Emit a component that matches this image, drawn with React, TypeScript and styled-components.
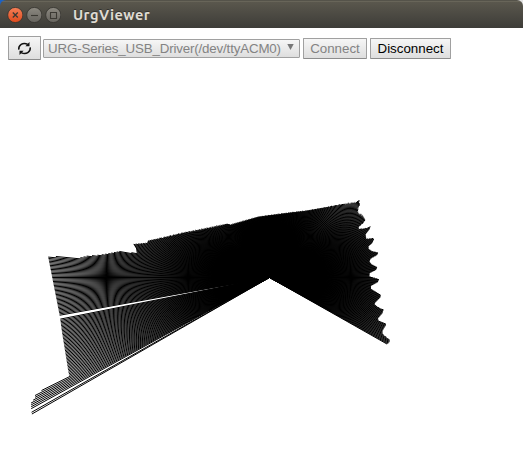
import React from "react";
import styled, { createGlobalStyle } from "styled-components";

const GlobalStyle = createGlobalStyle`
  body { margin: 0; background: #fff; overflow: hidden; }
`;

const Window = styled.div`
  display: flex;
  flex-direction: column;
  height: 463px;
  background: #fff;
  font-family: "Liberation Sans", Arial, sans-serif;
`;

const TitleFrame = styled.div`
  background: linear-gradient(90deg, #1c62c4 0 50%, #e4e4e4 50%);
`;

const TitleBar = styled.header`
  box-sizing: border-box;
  display: flex;
  align-items: center;
  height: 28px;
  padding: 1px 7px 0;
  border-radius: 6px 6px 0 0;
  background: linear-gradient(#55534a 0 1px, #686559 1px 2px, #5a574d 2px, #3d3c38 100%);
`;

const Controls = styled.div`
  display: flex;
  gap: 3px;
`;

const Title = styled.h1`
  margin: 0 0 0 12px;
  font: bold 14.5px/20px "Ubuntu", "Noto Sans", sans-serif;
  letter-spacing: 0.45px;
  color: #dfdbd2;
  text-shadow: 0 -1px 0 #33322e;
`;

const Toolbar = styled.div`
  display: flex;
  align-items: center;
  height: 24px;
  padding: 8px 8px 0;
`;

const Button = styled.button<{ $width: number; $tall?: boolean; $gap?: number }>`
  box-sizing: border-box;
  display: flex;
  align-items: center;
  justify-content: center;
  flex: none;
  width: ${(p) => p.$width}px;
  height: ${(p) => (p.$tall ? 24 : 21)}px;
  margin: 0 0 0 ${(p) => p.$gap ?? 0}px;
  padding: 0;
  border: 1px solid #a0a0a0;
  border-bottom-color: #8c8c8c;
  border-radius: 1px;
  background: linear-gradient(#f6f6f6, #dedede);
  font: 13.333px/15px "Liberation Sans", Arial, sans-serif;
  color: #000;
  &:disabled { color: #838383; }
`;

const PortSelect = styled.div`
  box-sizing: border-box;
  display: flex;
  justify-content: space-between;
  align-items: center;
  width: 257px;
  height: 19px;
  margin-left: 2px;
  padding: 0 5px 0 4px;
  border: 1px solid #a0a0a0;
  border-radius: 1px;
  background: linear-gradient(#f6f6f6, #dedede);
  font-size: 13.333px;
  letter-spacing: -0.16px;
  line-height: 15px;
  white-space: nowrap;
  color: #838383;
`;

const DropArrow = styled.svg`
  flex: none;
  margin-bottom: 2px;
`;

const Plot = styled.svg`
  display: block;
  flex: none;
`;

const PLOT_TOP = 60;
const ORIGIN: [number, number] = [269.5, 277.5];
const STEP = (2 * Math.PI) / 1024;

// Measured outline, clockwise from the lower-left end of the sweep.
const OUTLINE: [number, number][] = [
  [32.5, 417], [31.3, 411], [31, 402], [35, 398.5], [35, 394.5], [41, 391.5], [42, 389.5], [48, 387.5], [69.3, 376.2],
  [68.3, 371], [62, 332], [60, 317], [48, 256], [60, 256.7], [80, 257.8], [87, 256], [100, 255], [107.3, 253.8],
  [120, 251.3], [131.7, 252.7], [136.9, 253.7], [136, 248.3], [133.5, 244.2], [147, 243], [148.3, 240.7], [163.3, 237.5],
  [183.3, 232.8], [198.3, 230], [211.7, 227.3], [228.3, 223.7], [230, 225], [241.7, 221.7], [250, 219.3],
  [258.3, 217], [266.7, 215.8], [290, 212.7], [306.7, 210.7], [323.3, 207.7], [340, 204.5], [356.5, 202.3],
  [359, 200.3], [359.8, 205], [358, 208.3], [358, 213], [362.5, 215.5], [365.3, 220], [363, 223.3], [358.7, 226.7],
  [358.7, 229], [365, 228.6], [370.6, 226.3], [369.5, 229.3], [365.5, 234.3], [366.3, 239], [373, 238.3],
  [374, 239.3], [372, 243.3], [368.5, 246], [368.5, 249], [372, 251.3], [378.3, 252.7], [377, 255],
  [370.7, 258.5], [369.3, 261.7], [371.7, 264.5], [377.2, 267.3], [376, 269.8], [369.6, 273], [369.3, 276.5],
  [379, 279.3], [377.8, 282], [370.9, 285.8], [371, 289], [380.8, 295], [380.3, 297.3], [375, 302.7],
  [374.6, 304.5], [378.3, 307.5], [383.6, 309.5], [382.3, 313.3], [377.9, 318.3], [378.5, 320.5], [386.4, 324.3],
  [382.5, 330.7], [382.5, 334], [389.8, 340], [389.5, 342], [386, 345],
];

const EMPTY_STEPS = new Set([-30, -31, -83]);
const NOISY_FROM = 96;
const NOISY_TO = 460;

function rangeAt(angle: number): number {
  const dx = Math.cos(angle);
  const dy = -Math.sin(angle);
  let best = 0;
  for (let i = 1; i < OUTLINE.length; i++) {
    const ax = OUTLINE[i - 1][0] - ORIGIN[0];
    const ay = OUTLINE[i - 1][1] - ORIGIN[1];
    const ex = OUTLINE[i][0] - OUTLINE[i - 1][0];
    const ey = OUTLINE[i][1] - OUTLINE[i - 1][1];
    const det = dx * ey - dy * ex;
    if (Math.abs(det) < 1e-9) continue;
    const t = (ax * ey - ay * ex) / det;
    const s = (ax * dy - ay * dx) / det;
    if (s >= 0 && s <= 1 && t > best) best = t;
  }
  return best;
}

const RAYS: string[] = [];
for (let k = -84; k <= 512 + 85; k++) {
  // Steps past 512 lie below the left horizontal.
  if (EMPTY_STEPS.has(512 - k)) continue;
  let r = rangeAt(k * STEP);
  if (r <= 0) continue;
  if (k > NOISY_FROM && k < NOISY_TO) r += 0.7 * Math.sin(k * 1.9) * Math.sin(k * 0.37);
  const x = ORIGIN[0] + r * Math.cos(k * STEP);
  const y = ORIGIN[1] - r * Math.sin(k * STEP);
  RAYS.push(`M${ORIGIN[0]} ${ORIGIN[1]}L${x.toFixed(2)} ${y.toFixed(2)}`);
}

function WindowButton({ kind }: { kind: "close" | "min" | "max" }) {
  const close = kind === "close";
  const id = `wb-${kind}`;
  return (
    <svg width="16" height="16" viewBox="0 0 16 16">
      <defs>
        <linearGradient id={id} x1="0" y1="0" x2="0" y2="1">
          <stop offset="0" stopColor={close ? "#f58058" : "#8c8981"} />
          <stop offset="1" stopColor={close ? "#df4a1c" : "#66645e"} />
        </linearGradient>
      </defs>
      <circle cx="8.3" cy="8" r="7.6" fill={`url(#${id})`} stroke="#35342f" strokeWidth="0.8" />
      <g fill="none" stroke="#3b3933" strokeWidth="1.1">
        {close && <path d="M5.8 5.5l5 5M10.8 5.5l-5 5" strokeWidth="1.3" />}
        {kind === "min" && <path d="M5 8.5h7" />}
        {kind === "max" && <path d="M5.5 5.5h6v6h-6z" />}
      </g>
    </svg>
  );
}

function RefreshIcon() {
  return (
    <svg width="15" height="15" viewBox="0 0 15 15">
      <g fill="none" stroke="#111" strokeWidth="1.5">
        <path d="M1.8 8.6C1.2 4.2 5.8 0.8 10.8 3.4" />
        <path d="M13.2 6.4C13.8 10.8 9.2 14.2 4.2 11.6" />
      </g>
      <path d="M12.5 1v4.2H8.4zM2.5 14V9.8h4.1z" fill="#111" />
    </svg>
  );
}

export default function App() {
  return (
    <Window>
      <GlobalStyle />
      <TitleFrame>
        <TitleBar>
          <Controls>
            <WindowButton kind="close" />
            <WindowButton kind="min" />
            <WindowButton kind="max" />
          </Controls>
          <Title>UrgViewer</Title>
        </TitleBar>
      </TitleFrame>
      <Toolbar>
        <Button $width={33} $tall aria-label="Refresh"><RefreshIcon /></Button>
        <PortSelect>
          <span>URG-Series_USB_Driver(/dev/ttyACM0)</span>
          <DropArrow width="7" height="6" viewBox="0 0 7 6"><path d="M0.3 0h6.4L3.5 6z" fill="#777" /></DropArrow>
        </PortSelect>
        <Button $width={64} $gap={3} disabled>Connect</Button>
        <Button $width={81} $gap={3}>Disconnect</Button>
      </Toolbar>
      <Plot width="523" height="403" viewBox={`0 ${PLOT_TOP} 523 403`}>
        <g stroke="#000" strokeWidth="1" fill="none">
          {RAYS.map((d) => <path key={d} d={d} />)}
        </g>
      </Plot>
    </Window>
  );
}
